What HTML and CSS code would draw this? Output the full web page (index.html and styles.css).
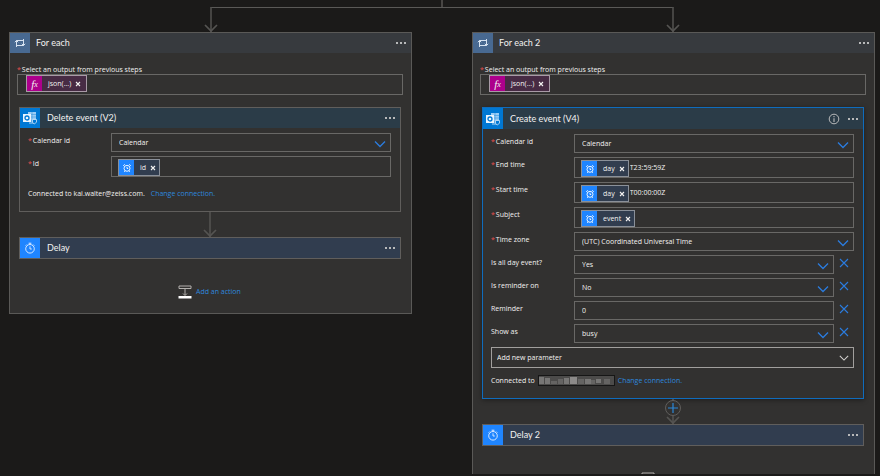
FILE: index.html
```html
<!DOCTYPE html>
<html lang="en">
<head>
  <meta charset="UTF-8">
  <meta name="viewport" content="width=device-width, initial-scale=1.0">
  <title>Flow designer</title>
  <link rel="stylesheet" href="styles.css">
</head>
<body>
  <!-- Shared icons -->
  <svg class="sprite" aria-hidden="true">
    <symbol id="i-loop" viewBox="0 0 12 10">
      <path d="M2.500 9V2.500H9M.8 4.200 2.500 2.500 4.200 4.200M9.500 1V7.500H3M7.800 5.800 9.500 7.500 11.200 5.800" fill="none" stroke="#d6e2f0" stroke-width="1"/>
    </symbol>
    <symbol id="i-outlook" viewBox="0 0 14 14">
      <path d="M5 1h8v8H5z" fill="#9accf5"/>
      <path d="M5 3.500h8M5 6h8M9 1v8" stroke="#3d97de" stroke-width=".6"/>
      <path d="M6 9h7v2l-2 2H6z" fill="#5aa9e6"/>
      <path d="M9.500 8.500h4v2.500l-2 2-2-1.500z" fill="#0078d4" stroke="#cfe6fa" stroke-width=".8"/>
      <rect x="0" y="3" width="8" height="8" fill="#eaf5fe"/>
      <circle cx="4" cy="7" r="2" fill="none" stroke="#0078d4" stroke-width="1.300"/>
    </symbol>
    <symbol id="i-timer" viewBox="0 0 12 12">
      <circle cx="6" cy="6.800" r="4.300" fill="none" stroke="#e6f1ff" stroke-width=".9"/>
      <path d="M6 4.300V7h1.800M4.600 1.200h2.800M6 1.200v1.400M9.300 2.600l1 1M2.700 2.600l-1 1" fill="none" stroke="#e6f1ff" stroke-width=".9"/>
    </symbol>
    <symbol id="i-alarm" viewBox="0 0 10 10">
      <circle cx="5" cy="5.300" r="3" fill="none" stroke="#fff" stroke-width=".9"/>
      <path d="M5 3.800V5.500h1.200M1.200 2.800 2.800 1.300M8.800 2.800 7.200 1.300M3 7.800 2.300 8.800M7 7.800l.7 1" fill="none" stroke="#fff" stroke-width=".9"/>
    </symbol>
    <symbol id="i-chevron" viewBox="0 0 12 8">
      <path d="M1 1.500 6 6.500 11 1.500" fill="none" stroke="currentColor" stroke-width="1.300"/>
    </symbol>
    <symbol id="i-close" viewBox="0 0 10 10">
      <path d="M1 1 9 9M9 1 1 9" fill="none" stroke="currentColor" stroke-width="1.100"/>
    </symbol>
    <symbol id="i-remove" viewBox="0 0 6 6">
      <path d="M1 1 5 5M5 1 1 5" fill="none" stroke="currentColor" stroke-width="1.100"/>
    </symbol>
    <symbol id="i-dots" viewBox="0 0 12 4">
      <path d="M1 1h2v2H1zM5 1h2v2H5zM9 1h2v2H9z" fill="currentColor"/>
    </symbol>
    <symbol id="i-info" viewBox="0 0 12 12">
      <circle cx="6" cy="6" r="4.800" fill="none" stroke="currentColor" stroke-width="1"/>
      <path d="M6 5.200V9M6 3v1.200" stroke="currentColor" stroke-width="1.100"/>
    </symbol>
    <symbol id="i-head" viewBox="0 0 14 8">
      <path d="M1 1 7 7 13 1" fill="none" stroke="#555452" stroke-width="1.700"/>
    </symbol>
    <symbol id="i-insert" viewBox="0 0 14 14">
      <path d="M1 3.500V1h12v2.500zM7 3.500V10M5 8.500 7 10.500 9 8.500" fill="none" stroke="#b3b0ad" stroke-width="1"/>
      <path d="M.5 11h13v2.500H.5z" fill="#fff"/>
    </symbol>
  </svg>

  <main class="canvas">
    <div class="stem"></div>
    <div class="branch">
      <svg class="head"><use href="#i-head"/></svg>
      <svg class="head"><use href="#i-head"/></svg>
    </div>

    <div class="scopes">
      <!-- Left branch -->
      <section class="scope">
        <header class="bar bar-scope">
          <span class="bar-icon"><svg width="12" height="10"><use href="#i-loop"/></svg></span>
          <h2>For each</h2>
          <button class="icon-btn" aria-label="Menu for For each"><svg width="12" height="4"><use href="#i-dots"/></svg></button>
        </header>
        <div class="source">
          <label class="required" for="source1">Select an output from previous steps</label>
          <div class="field field-tokens">
            <span class="token token-fx"><span class="token-icon">f<small>x</small></span>json(...)<button aria-label="Remove json"><svg width="6" height="6"><use href="#i-remove"/></svg></button></span>
            <input id="source1" type="text">
          </div>
        </div>

        <div class="steps">
          <article class="card">
            <header class="bar bar-outlook">
              <span class="bar-icon"><svg width="14" height="14"><use href="#i-outlook"/></svg></span>
              <h3>Delete event (V2)</h3>
              <button class="icon-btn" aria-label="Menu for Delete event"><svg width="12" height="4"><use href="#i-dots"/></svg></button>
            </header>
            <div class="card-body">
              <div class="row">
                <label class="required" for="cal1">Calendar id</label>
                <div class="field">
                  <select id="cal1"><option>Calendar</option></select>
                  <svg class="chevron"><use href="#i-chevron"/></svg>
                </div>
              </div>
              <div class="row">
                <label class="required" for="id1">Id</label>
                <div class="field field-tokens">
                  <span class="token"><span class="token-icon"><svg width="10" height="10"><use href="#i-alarm"/></svg></span>id<button aria-label="Remove id"><svg width="6" height="6"><use href="#i-remove"/></svg></button></span>
                  <input id="id1" type="text">
                </div>
              </div>
              <p class="connection">Connected to kai.walter@zeiss.com. <a href="#">Change connection.</a></p>
            </div>
          </article>

          <div class="arrow"><svg class="head"><use href="#i-head"/></svg></div>

          <article class="card">
            <header class="bar bar-delay">
              <span class="bar-icon"><svg width="12" height="12"><use href="#i-timer"/></svg></span>
              <h3>Delay</h3>
              <button class="icon-btn" aria-label="Menu for Delay"><svg width="12" height="4"><use href="#i-dots"/></svg></button>
            </header>
          </article>

          <button class="add-action"><svg width="14" height="14"><use href="#i-insert"/></svg>Add an action</button>
        </div>
      </section>

      <!-- Right branch -->
      <section class="scope">
        <header class="bar bar-scope">
          <span class="bar-icon"><svg width="12" height="10"><use href="#i-loop"/></svg></span>
          <h2>For each 2</h2>
          <button class="icon-btn" aria-label="Menu for For each 2"><svg width="12" height="4"><use href="#i-dots"/></svg></button>
        </header>
        <div class="source">
          <label class="required" for="source2">Select an output from previous steps</label>
          <div class="field field-tokens">
            <span class="token token-fx"><span class="token-icon">f<small>x</small></span>json(...)<button aria-label="Remove json"><svg width="6" height="6"><use href="#i-remove"/></svg></button></span>
            <input id="source2" type="text">
          </div>
        </div>

        <div class="steps">
          <article class="card card-selected">
            <header class="bar bar-outlook">
              <span class="bar-icon"><svg width="14" height="14"><use href="#i-outlook"/></svg></span>
              <h3>Create event (V4)</h3>
              <button class="icon-btn" aria-label="Info"><svg width="12" height="12"><use href="#i-info"/></svg></button>
              <button class="icon-btn" aria-label="Menu for Create event"><svg width="12" height="4"><use href="#i-dots"/></svg></button>
            </header>
            <div class="card-body">
              <div class="row">
                <label class="required" for="cal2">Calendar id</label>
                <div class="field">
                  <select id="cal2"><option>Calendar</option></select>
                  <svg class="chevron"><use href="#i-chevron"/></svg>
                </div>
              </div>
              <div class="row">
                <label class="required" for="end">End time</label>
                <div class="field field-tokens">
                  <span class="token"><span class="token-icon"><svg width="10" height="10"><use href="#i-alarm"/></svg></span>day<button aria-label="Remove day"><svg width="6" height="6"><use href="#i-remove"/></svg></button></span>
                  <input id="end" type="text" value="T23:59:59Z">
                </div>
              </div>
              <div class="row">
                <label class="required" for="start">Start time</label>
                <div class="field field-tokens">
                  <span class="token"><span class="token-icon"><svg width="10" height="10"><use href="#i-alarm"/></svg></span>day<button aria-label="Remove day"><svg width="6" height="6"><use href="#i-remove"/></svg></button></span>
                  <input id="start" type="text" value="T00:00:00Z">
                </div>
              </div>
              <div class="row">
                <label class="required" for="subject">Subject</label>
                <div class="field field-tokens">
                  <span class="token"><span class="token-icon"><svg width="10" height="10"><use href="#i-alarm"/></svg></span>event<button aria-label="Remove event"><svg width="6" height="6"><use href="#i-remove"/></svg></button></span>
                  <input id="subject" type="text">
                </div>
              </div>
              <div class="row">
                <label class="required" for="zone">Time zone</label>
                <div class="field">
                  <select id="zone"><option>(UTC) Coordinated Universal Time</option></select>
                  <svg class="chevron"><use href="#i-chevron"/></svg>
                </div>
              </div>
              <div class="row">
                <label for="allday">Is all day event?</label>
                <div class="field">
                  <select id="allday"><option>Yes</option></select>
                  <svg class="chevron"><use href="#i-chevron"/></svg>
                </div>
                <button class="clear" aria-label="Remove Is all day event"><svg width="10" height="10"><use href="#i-close"/></svg></button>
              </div>
              <div class="row">
                <label for="reminderon">Is reminder on</label>
                <div class="field">
                  <select id="reminderon"><option>No</option></select>
                  <svg class="chevron"><use href="#i-chevron"/></svg>
                </div>
                <button class="clear" aria-label="Remove Is reminder on"><svg width="10" height="10"><use href="#i-close"/></svg></button>
              </div>
              <div class="row">
                <label for="reminder">Reminder</label>
                <div class="field">
                  <input id="reminder" type="text" value="0">
                </div>
                <button class="clear" aria-label="Remove Reminder"><svg width="10" height="10"><use href="#i-close"/></svg></button>
              </div>
              <div class="row">
                <label for="showas">Show as</label>
                <div class="field">
                  <select id="showas"><option>busy</option></select>
                  <svg class="chevron"><use href="#i-chevron"/></svg>
                </div>
                <button class="clear" aria-label="Remove Show as"><svg width="10" height="10"><use href="#i-close"/></svg></button>
              </div>
              <div class="field field-add">
                <select aria-label="Add new parameter"><option>Add new parameter</option></select>
                <svg class="chevron"><use href="#i-chevron"/></svg>
              </div>
              <p class="connection">Connected to
                <svg class="redacted" viewBox="0 0 77 11" aria-hidden="true">
                  <rect width="77" height="11" fill="#161616"/>
                  <rect x="1" y="1" width="75" height="9" fill="#4c4b4a"/>
                  <path d="M1 2h5v7H1zM7 3h5v6H7zM26 3h5v6h-5zM47 4h6v5h-6zM58 4h5v4h-5z" fill="#777675"/>
                  <path d="M13 6h6v3h-6zM20 4h5v5h-5zM40 4h6v5h-6zM53 5h4v4h-4zM66 4h6v5h-6z" fill="#656463"/>
                  <path d="M32 2h7v7h-7z" fill="#8c8a89"/>
                </svg>
                <a href="#">Change connection.</a></p>
            </div>
          </article>

          <div class="arrow">
            <button class="insert" aria-label="Insert a new step"><svg width="12" height="12" viewBox="0 0 12 12"><path d="M6 1v10M1 6h10" stroke="#2b88d8" stroke-width="1.200"/></svg></button>
            <svg class="head"><use href="#i-head"/></svg>
          </div>

          <article class="card">
            <header class="bar bar-delay">
              <span class="bar-icon"><svg width="12" height="12"><use href="#i-timer"/></svg></span>
              <h3>Delay 2</h3>
              <button class="icon-btn" aria-label="Menu for Delay 2"><svg width="12" height="4"><use href="#i-dots"/></svg></button>
            </header>
          </article>

          <button class="add-action" aria-label="Add an action"><svg width="14" height="14"><use href="#i-insert"/></svg></button>
        </div>
      </section>
    </div>
  </main>
</body>
</html>
```

FILE: styles.css
```css
* {
  box-sizing: border-box;
}

body {
  margin: 0;
  background-color: #1b1a19;
  color: #f3f2f1;
  font-family: "Open Sans", "Noto Sans", sans-serif;
  font-size: 7px;
  line-height: 10px;
}

h2, h3, p {
  margin: 0;
}

button, input, select {
  margin: 0;
  padding: 0;
  border: none;
  background: none;
  color: inherit;
  font: inherit;
}

button {
  cursor: pointer;
}

svg {
  display: block;
  flex-shrink: 0;
}

.sprite {
  display: none;
}

a {
  color: #2e88de;
  text-decoration: none;
}

.canvas {
  display: flex;
  flex-direction: column;
  height: 100vh;
  padding: 0 5px 2px 9px;
  overflow: hidden;
}

/* Connector that splits into the two branches */
.stem {
  width: 2px;
  height: 7px;
  margin: 0 auto;
  background-color: #484644;
}

.branch {
  display: flex;
  align-items: flex-end;
  justify-content: space-between;
  height: 25px;
  margin: 0 calc((100% - 62px) / 4);
  border: 2px solid #454442;
  border-top: 1px solid #5a5957;
  border-bottom: none;
}

.head {
  width: 14px;
  height: 8px;
}

.branch .head {
  margin: 0 -8px;
}

.scopes {
  display: grid;
  grid-template-columns: 1fr 1fr;
  gap: 60px;
  align-items: start;
  flex: 1;
  min-height: 0;
  overflow: hidden;
}

.scope {
  border: 1px solid #5a5957;
  background-color: #323130;
}

/* Header bars */
.bar {
  display: flex;
  align-items: center;
  gap: 6px;
  height: 20px;
  padding-right: 4px;
}
.card .bar {
  gap: 7px;
}

.bar h2,
.bar h3 {
  flex: 1;
  font-family: Lato, "Open Sans", sans-serif;
  font-size: 9px;
  font-weight: 400;
}

.bar-icon {
  display: flex;
  align-items: center;
  justify-content: center;
  width: 20px;
  height: 100%;
}

.bar-scope {
  background-color: #373a3e;
}
.bar-scope .bar-icon {
  background-color: #486991;
}
.bar-outlook {
  background-color: #2b3c48;
}
.bar-outlook .bar-icon {
  background-color: #0078d4;
}
.bar-delay {
  background-color: #313d4f;
}
.bar-delay .bar-icon {
  background-color: #1f85ff;
}

.icon-btn {
  color: #b8b9ba;
}

/* Fields */
.required::before {
  content: "*";
  margin-right: 1px;
  color: #e8504f;
}

.source {
  padding: 12px 8px 12px 7px;
}
.source label {
  display: block;
  height: 9px;
}

.field {
  position: relative;
  display: flex;
  flex: 1;
  height: 19px;
  border: 1px solid #696866;
}

.field select,
.field input {
  flex: 1;
  min-width: 0;
  padding-left: 7px;
  appearance: none;
  outline: none;
}

.chevron {
  position: absolute;
  top: 6px;
  right: 4px;
  width: 12px;
  height: 8px;
  color: #2b7cdf;
  pointer-events: none;
}

.field-tokens {
  align-items: flex-end;
  height: 21px;
  padding-left: 6px;
}
.field-tokens input {
  height: 18px;
  padding: 0 0 2px 1px;
}

.token {
  display: flex;
  align-items: center;
  gap: 6px;
  height: 17px;
  padding-right: 3px;
  border: 1px solid #8a9099;
  background-color: #313d4f;
}
.token button {
  margin-left: -2px;
}
.token-icon {
  display: flex;
  align-items: center;
  justify-content: center;
  width: 15px;
  height: 15px;
  background-color: #1f85ff;
}

.source .field-tokens {
  align-items: flex-start;
  padding-left: 8px;
}
.token-fx {
  padding-right: 5px;
  border-color: #a89aa6;
  background-color: #472b44;
}
.token-fx .token-icon {
  background-color: #ad008c;
  font-family: "Liberation Serif", serif;
  font-size: 11px;
  font-style: italic;
}
.token-fx small {
  padding-top: 3px;
  font-size: 8px;
}

/* Cards */
.steps {
  display: flex;
  flex-direction: column;
  padding: 0 10px 14px 9px;
}

.card {
  border: 1px solid #605e5c;
}

.card-selected {
  border-color: #0f6cbd;
  box-shadow: 0 1px 5px rgba(0, 0, 0, 0.4);
}
.card-selected > .bar {
  height: 21px;
}

.card-body {
  display: flex;
  flex-direction: column;
  gap: 4px;
  padding: 5px 9px 12px 8px;
}

.row {
  display: flex;
  align-items: flex-start;
}
.row label {
  width: 83px;
  line-height: 16px;
}

.clear {
  width: 20px;
  height: 16px;
  padding-left: 5px;
  color: #2b7cdf;
}

.field-add {
  flex: none;
  height: 21px;
  border-color: #a19f9d;
}
.field-add select {
  padding-left: 5px;
}
.field-add .chevron {
  width: 10px;
  color: #d2d0ce;
}

.connection {
  display: flex;
  align-items: center;
  gap: 6px;
  height: 11px;
  margin-top: 3px;
}
.card:not(.card-selected) .connection {
  margin: 7px 0 0;
}

.redacted {
  width: 77px;
  height: 11px;
  margin: 0 -3px;
}

/* Arrow between two steps */
.arrow {
  display: flex;
  flex-direction: column;
  align-items: center;
  justify-content: flex-end;
  height: 25px;
  background: linear-gradient(#4c4b49, #4c4b49) center / 2px 100% no-repeat;
}

.insert {
  display: flex;
  align-items: center;
  justify-content: center;
  width: 16px;
  height: 16px;
  border: 1px solid #605e5c;
  border-radius: 50%;
  background-color: #323130;
}

.add-action {
  display: flex;
  align-items: center;
  align-self: center;
  gap: 4px;
  min-width: 64px;
  margin-top: 26px;
  color: #2e88de;
}
```
